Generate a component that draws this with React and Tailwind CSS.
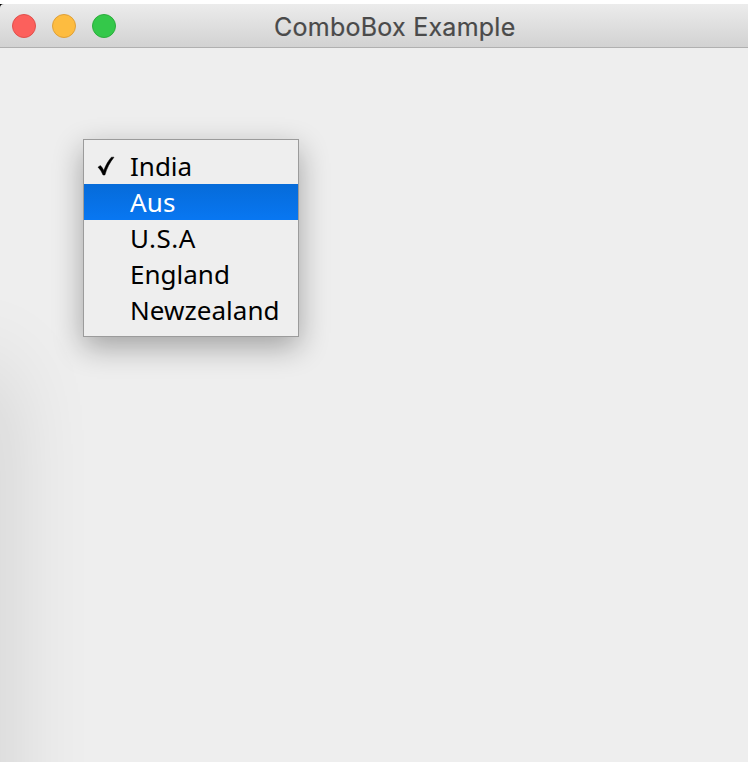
const items = [
  { label: 'India', tracking: 'tracking-[0px]' },
  { label: 'Aus', tracking: 'tracking-[0.2px]' },
  { label: 'U.S.A', tracking: 'tracking-[0.5px]' },
  { label: 'England', tracking: 'tracking-[0px]' },
  { label: 'Newzealand', tracking: 'tracking-[0.05px]' },
];

function TitleBar() {
  return (
    <header className="mt-1 flex h-11 shrink-0 items-center rounded-tl-[4px] border-b border-[#b0b0b0] bg-linear-to-b from-[#ececec] to-[#d2d2d2] pl-3">
      <div className="flex w-[262px] gap-4">
        <span className="size-6 rounded-full border border-[#e0504c] bg-[#fc605c]" />
        <span className="size-6 rounded-full border border-[#dfa038] bg-[#fdbc40]" />
        <span className="size-6 rounded-full border border-[#2cad3c] bg-[#34c84a]" />
      </div>
      <h1 className="pt-[3px] font-['Inter',sans-serif] text-[25px] leading-none tracking-[0.25px] whitespace-nowrap text-[#4a4a4a] [-webkit-text-stroke:0.2px_#4a4a4a]">
        ComboBox Example
      </h1>
    </header>
  );
}

function Menu() {
  return (
    <ul className="w-[216px] border border-[#9b9b9b] bg-[#eeeeee] pt-2 pb-2 font-['Noto_Sans',sans-serif] text-[26px] leading-9 text-black shadow-[0_10px_28px_rgba(0,0,0,0.32)]">
      {items.map((item, i) => (
        <li
          key={item.label}
          className={
            i === 1
              ? 'flex h-9 items-center bg-linear-to-b from-[#066bd9] to-[#0877f2] text-white'
              : 'flex h-9 items-center'
          }
        >
          <span className="flex w-[46px] shrink-0 pl-[13px]">
            {i === 0 && (
              <svg width="18" height="22" viewBox="0 0 18 22" aria-hidden="true">
                <path
                  d="M1 12.2 L3.4 10.6 C4.9 12.1 5.9 13.7 6.8 15.4 C8.8 10.1 11.4 5.4 14.4 2.2 L17 2.2 C12.9 7.3 9.7 13.2 7.9 20 L6 20 C4.9 17.2 3.2 14.2 1 12.2 Z"
                  stroke="black"
                  strokeWidth="0.5"
                />
              </svg>
            )}
          </span>
          <span className={item.tracking}>{item.label}</span>
        </li>
      ))}
    </ul>
  );
}

export default function App() {
  return (
    <div className="relative flex h-[762px] w-[748px] flex-col overflow-hidden bg-white">
      <span className="absolute top-1 left-0 h-1 w-1 bg-black" />
      <div className="relative flex grow flex-col">
        <TitleBar />
        <main className="relative grow overflow-hidden bg-[#eeeeee] pt-[91px] pl-[83px]">
          <div className="absolute top-[322px] -left-[60px] h-[600px] w-[60px] shadow-[0_0_90px_0_rgba(0,0,0,0.16)]" />
          <div className="relative">
            <Menu />
          </div>
        </main>
      </div>
    </div>
  );
}
